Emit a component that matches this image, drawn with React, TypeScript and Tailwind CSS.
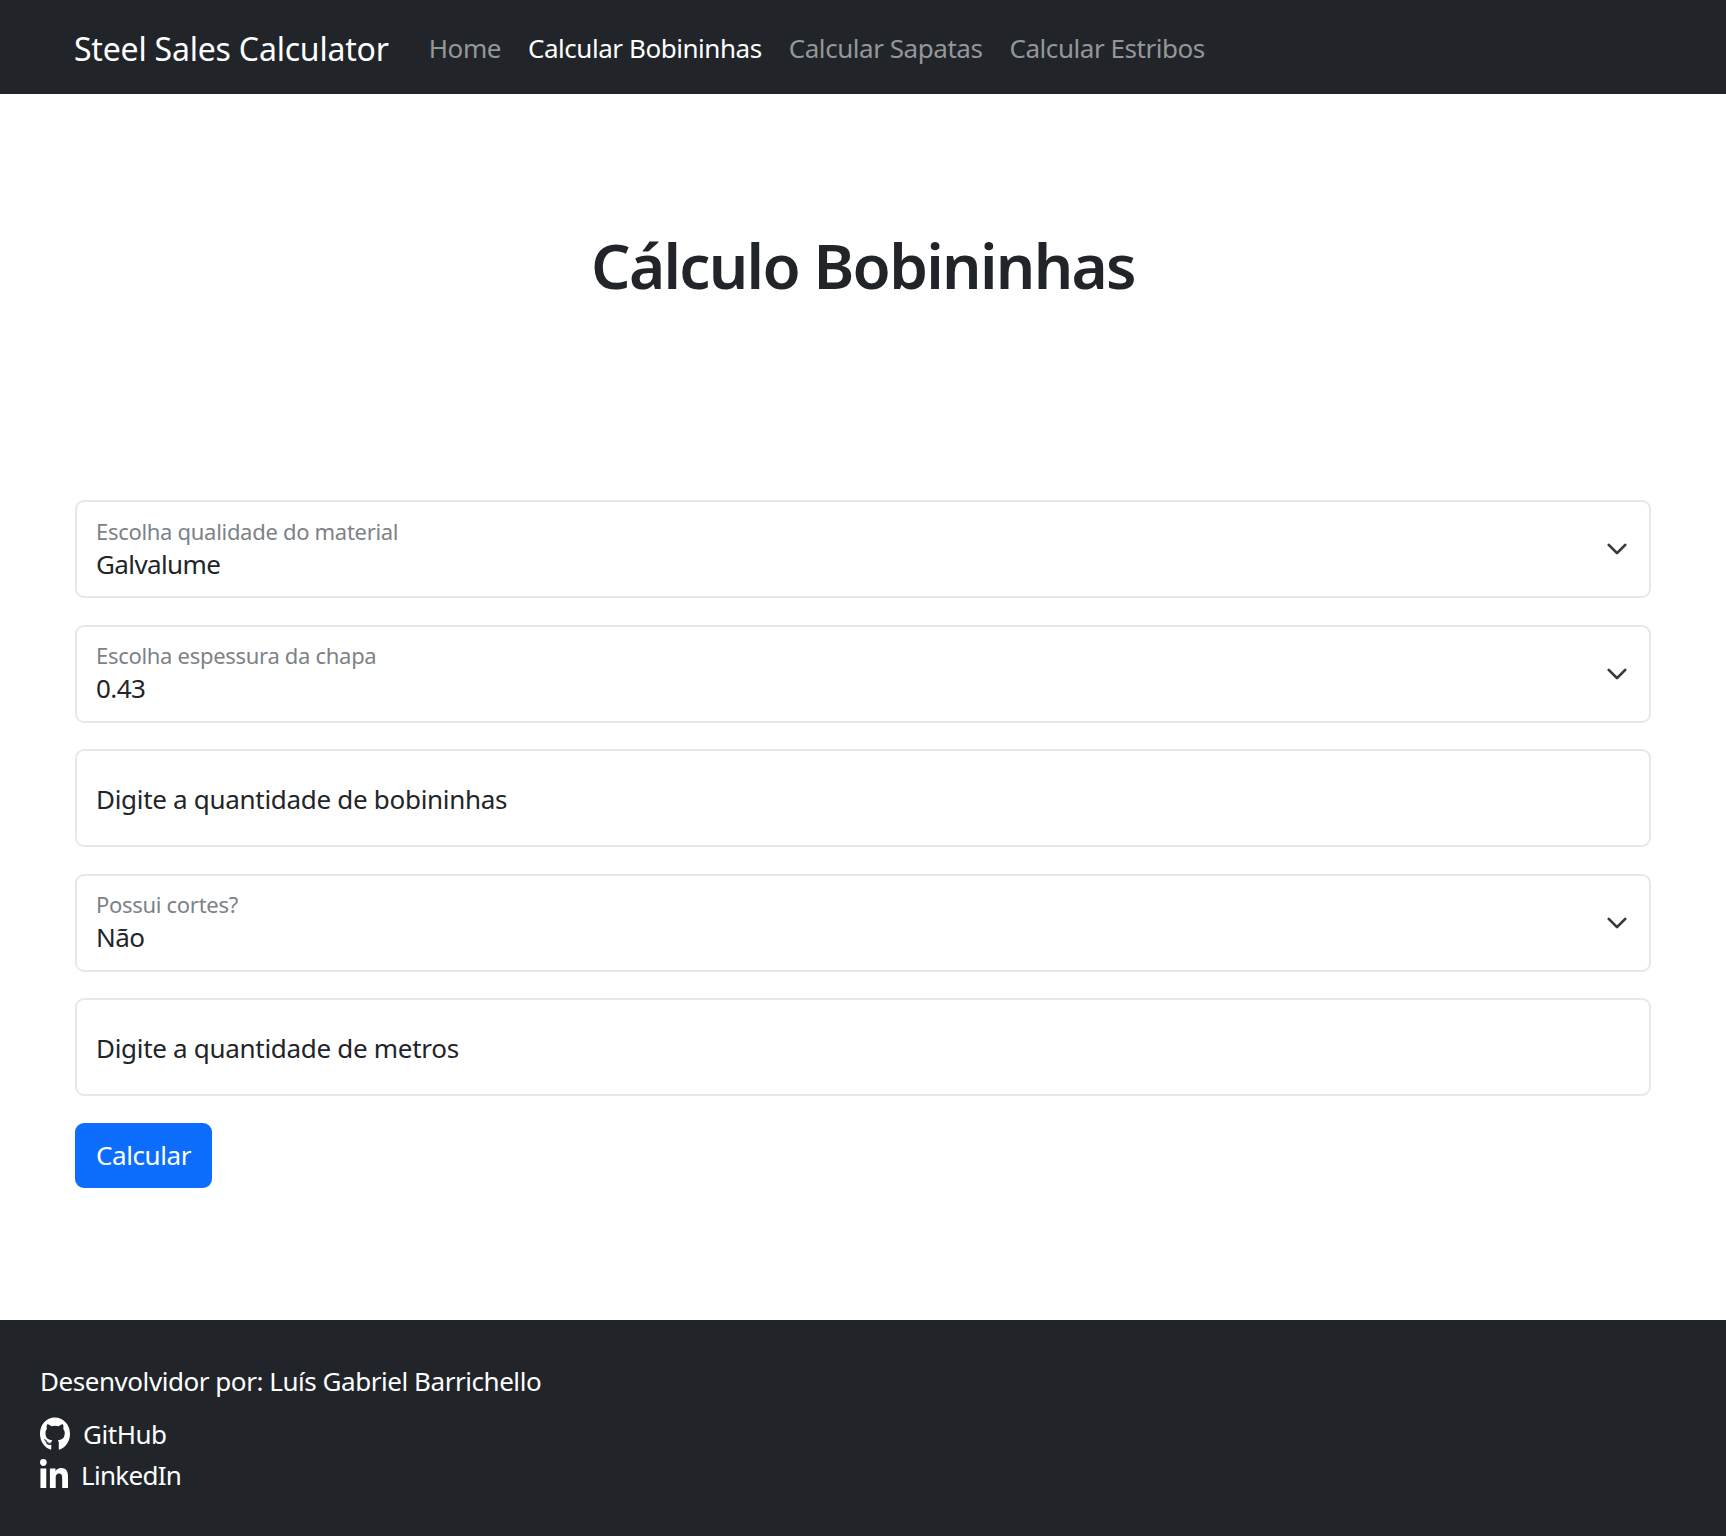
import { FaGithub, FaLinkedinIn } from "react-icons/fa";

const font = "font-['Noto_Sans',sans-serif]";

function Chevron() {
  return (
    <svg viewBox="0 0 16 16" className="w-[22px] h-[22px] shrink-0" fill="none" stroke="#343a40" strokeWidth="2" strokeLinecap="round" strokeLinejoin="round">
      <path d="M2 5l6 6 6-6" />
    </svg>
  );
}

function SelectField({ label, value }: { label: string; value: string }) {
  return (
    <div className="h-[98px] border-2 border-[#e6e8ea] rounded-[9px] pl-[19px] pr-[21px] flex items-center justify-between">
      <div className="flex flex-col pb-[2px]">
        <span className="text-[22px] leading-[30px] mb-[1px] text-[#7d8287] tracking-[-0.3px]">{label}</span>
        <span className="text-[26px] leading-[34px] text-[#212529] tracking-[-0.6px]">{value}</span>
      </div>
      <Chevron />
    </div>
  );
}

function InputField({ label }: { label: string }) {
  return (
    <div className="h-[98px] border-2 border-[#e6e8ea] rounded-[9px] pl-[19px] pt-[2px] flex items-center">
      <span className="text-[26px] text-[#212529] tracking-[-0.3px]">{label}</span>
    </div>
  );
}

export default function App() {
  return (
    <div className={`${font} w-full min-h-[1536px] flex flex-col bg-white`}>
      <nav className="h-[94px] bg-[#212529] flex items-center pl-[74px] pt-[2px]">
        <span className="text-[32px] text-white mr-[40px] tracking-[-0.2px] pt-[2px]">Steel Sales Calculator</span>
        <div className="flex items-center gap-[27px] text-[26px] tracking-[-0.45px] text-[#94979a]">
          <span>Home</span>
          <span className="text-white">Calcular Bobininhas</span>
          <span>Calcular Sapatas</span>
          <span>Calcular Estribos</span>
        </div>
      </nav>
      <main className="flex-1 px-[75px]">
        <h1 className="text-center text-[62px] font-semibold text-[#212529] leading-[80px] mt-[131px] mb-[195px] tracking-[-1.7px]">Cálculo Bobininhas</h1>
        <div className="flex flex-col gap-[26.5px]">
          <SelectField label="Escolha qualidade do material" value="Galvalume" />
          <SelectField label="Escolha espessura da chapa" value="0.43" />
          <InputField label="Digite a quantidade de bobininhas" />
          <SelectField label="Possui cortes?" value="Não" />
          <InputField label="Digite a quantidade de metros" />
        </div>
        <button className="mt-[27px] w-[137px] h-[65px] bg-[#0d6efd] text-white text-[26px] rounded-[9px] tracking-[-0.4px]">Calcular</button>
      </main>
      <footer className="h-[216px] bg-[#212529] text-white pl-[40px] pt-[42px] text-[26px] tracking-[-0.45px]">
        <div className="leading-[38px]">Desenvolvidor por: Luís Gabriel Barrichello</div>
        <div className="mt-[15px] flex items-center leading-[38px]"><FaGithub preserveAspectRatio="none" className="w-[30px] h-[34px] mr-[13px]" />GitHub</div>
        <div className="mt-[3px] flex items-center leading-[38px] tracking-[-0.7px]"><FaLinkedinIn preserveAspectRatio="none" className="w-[28px] h-[33px] mr-[13px]" />LinkedIn</div>
      </footer>
    </div>
  );
}
